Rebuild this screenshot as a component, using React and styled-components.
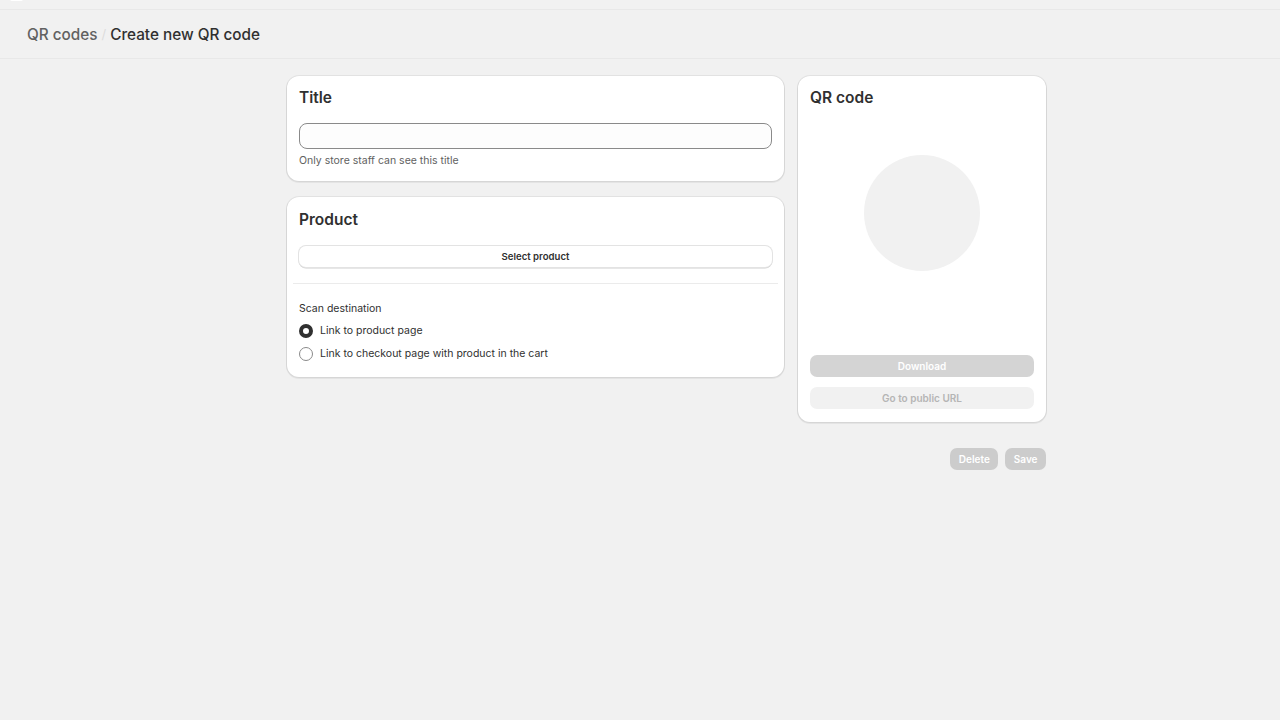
import React from "react";
import styled, { createGlobalStyle } from "styled-components";

const Global = createGlobalStyle`
  html, body { margin: 0; padding: 0; background: #f1f1f1; }
  body { font-family: Inter, "Noto Sans", sans-serif; color: #303030; -webkit-font-smoothing: antialiased; }
  * { box-sizing: border-box; }
`;

const Page = styled.div`
  min-height: 720px;
  background: #f1f1f1;
`;

const TopStrip = styled.div`
  height: 10px;
  border-bottom: 1px solid #e8e8e8;
  position: relative;
`;

const TopMark = styled.div`
  position: absolute;
  left: 10px;
  top: -3px;
  width: 13px;
  height: 4px;
  border-radius: 2px;
  background: #ffffff;
`;

const Header = styled.header`
  height: 49px;
  display: flex;
  align-items: center;
  padding: 0 27px;
  border-bottom: 1px solid #e8e8e8;
  font-size: 15.3px;
  gap: 4px;
`;

const Crumb = styled.span`
  color: ${(p) => (p.$current ? "#303030" : "#616161")};
  font-weight: 450;
`;

const Sep = styled.span`
  color: #dcdcdc;
  font-size: 13px;
`;

const Main = styled.main`
  width: 759px;
  margin: 17px 0 0 287px;
  display: flex;
  flex-direction: column;
  gap: 26px;
`;

const Columns = styled.div`
  display: flex;
  gap: 14px;
  align-items: flex-start;
`;

const LeftCol = styled.div`
  width: 497px;
  display: flex;
  flex-direction: column;
  gap: 16px;
`;

const RightCol = styled.div`
  width: 248px;
`;

const Card = styled.section`
  background: #ffffff;
  border-radius: 12px;
  box-shadow: 0 0 0 1px rgba(0, 0, 0, 0.06), 0 1px 0 1px rgba(0, 0, 0, 0.05);
  padding: 12px 12px ${(p) => (p.$extraBottom ? "13px" : "12px")};
`;

const Heading = styled.h2`
  margin: 0;
  font-size: 15.5px;
  line-height: ${(p) => (p.$tall ? "22px" : "20px")};
  font-weight: 600;
  color: #303030;
`;

const TextInput = styled.input`
  display: block;
  width: 100%;
  height: 26px;
  margin-top: 15px;
  border: 1px solid #8a8a8a;
  border-radius: 8px;
  background: #fdfdfd;
  outline: none;
  font: inherit;
`;

const Help = styled.div`
  margin-top: 5px;
  font-size: 10.5px;
  line-height: 14px;
  color: #616161;
`;

const SecondaryButton = styled.button`
  display: block;
  width: 100%;
  height: 21px;
  margin-top: 15px;
  border: none;
  border-radius: 7px;
  background: #ffffff;
  box-shadow: 0 0 0 1px #e3e3e3, 0 1px 0 0.5px #cfcfcf;
  font-family: inherit;
  font-size: 9.6px;
  font-weight: 600;
  color: #303030;
`;

const Divider = styled.hr`
  margin: 16px -6px 0;
  border: none;
  border-top: 1px solid #ebebeb;
`;

const FieldLabel = styled.div`
  margin-top: 18px;
  font-size: 10.5px;
  line-height: 14px;
  color: #303030;
`;

const RadioList = styled.div`
  display: flex;
  flex-direction: column;
  gap: 9px;
  margin-top: 8px;
  padding-bottom: 4px;
`;

const RadioRow = styled.label`
  display: flex;
  align-items: center;
  gap: 7px;
  font-size: 10.5px;
  line-height: 14px;
  color: #303030;
`;

const RadioDot = styled.span`
  width: 14px;
  height: 14px;
  border-radius: 50%;
  flex: none;
  background: #ffffff;
  border: ${(p) => (p.$checked ? "4px solid #303030" : "1px solid #8a8a8a")};
`;

const Preview = styled.div`
  height: 247px;
  display: flex;
  justify-content: center;
  padding-top: 47px;
`;

const Circle = styled.div`
  width: 116px;
  height: 116px;
  border-radius: 50%;
  background: #f1f1f1;
`;

const StackButtons = styled.div`
  display: flex;
  flex-direction: column;
  gap: 10px;
`;

const FlatButton = styled.button`
  width: 100%;
  height: 22px;
  border: none;
  border-radius: 7px;
  font-family: inherit;
  font-size: 10px;
  font-weight: 600;
  background: ${(p) => (p.$tone === "dark" ? "#d4d4d4" : "#f1f1f1")};
  color: ${(p) => (p.$tone === "dark" ? "#ffffff" : "#b5b5b5")};
`;

const Actions = styled.div`
  display: flex;
  justify-content: flex-end;
  gap: 7px;
`;

const ActionButton = styled.button`
  height: 22px;
  padding: 0 8.5px;
  border: none;
  border-radius: 7px;
  background: #cccccc;
  color: #ffffff;
  font-family: inherit;
  font-size: 10px;
  font-weight: 600;
`;

export default function App() {
  return (
    <Page>
      <Global />
      <TopStrip>
        <TopMark />
      </TopStrip>
      <Header>
        <Crumb>QR codes</Crumb>
        <Sep>/</Sep>
        <Crumb $current>Create new QR code</Crumb>
      </Header>
      <Main>
        <Columns>
          <LeftCol>
            <Card $extraBottom>
              <Heading>Title</Heading>
              <TextInput aria-label="Title" />
              <Help>Only store staff can see this title</Help>
            </Card>
            <Card>
              <Heading $tall>Product</Heading>
              <SecondaryButton>Select product</SecondaryButton>
              <Divider />
              <FieldLabel>Scan destination</FieldLabel>
              <RadioList>
                <RadioRow>
                  <RadioDot $checked />
                  Link to product page
                </RadioRow>
                <RadioRow>
                  <RadioDot />
                  Link to checkout page with product in the cart
                </RadioRow>
              </RadioList>
            </Card>
          </LeftCol>
          <RightCol>
            <Card $extraBottom>
              <Heading>QR code</Heading>
              <Preview>
                <Circle />
              </Preview>
              <StackButtons>
                <FlatButton $tone="dark">Download</FlatButton>
                <FlatButton>Go to public URL</FlatButton>
              </StackButtons>
            </Card>
          </RightCol>
        </Columns>
        <Actions>
          <ActionButton>Delete</ActionButton>
          <ActionButton>Save</ActionButton>
        </Actions>
      </Main>
    </Page>
  );
}
